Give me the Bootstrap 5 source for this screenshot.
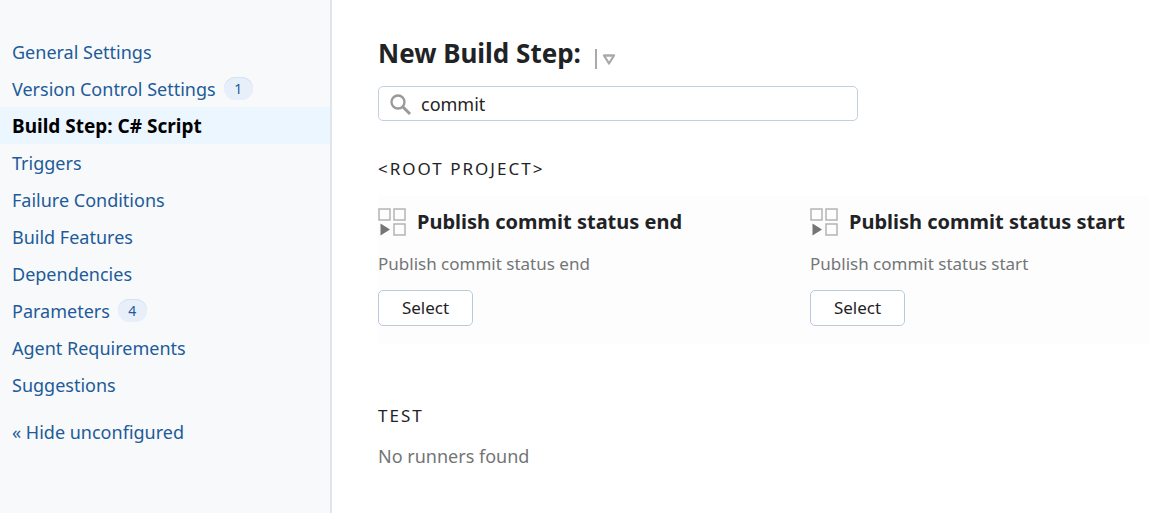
<!DOCTYPE html>
<html lang="en">
<head>
<meta charset="utf-8">
<meta name="viewport" content="width=device-width, initial-scale=1">
<title>New Build Step</title>
<link href="https://cdn.jsdelivr.net/npm/bootstrap@5.3.0/dist/css/bootstrap.min.css" rel="stylesheet">
<style>
body { font-family: "Noto Sans", "Open Sans", sans-serif; font-size: 18px; line-height: 25px; color: #1f2326; }
.settings-nav { width: 332px; background: #f7f9fb; border-right: 2px solid #dfe5eb; padding-top: 33px; }
.settings-nav .nav-link { color: #1e5b99; padding: 7px 12px 5px; gap: 8px; }
.settings-nav .nav-link.active { background: #ebf6ff; color: #000; font-size: 19px; font-weight: 700; }
.settings-nav .toggle-link { margin-top: 10px; }
.count { background: #e7effa; box-shadow: inset 0 1px #d3e2f0; color: #1e5b99; font-size: 14px; line-height: 23px; width: 29px; height: 23px; margin: -2px 0 0; }
.step-main { padding: 35px 0 24px 46px; }
.step-heading { gap: 14px; }
.step-title { font-size: 26px; line-height: 36px; font-weight: 700; }
.search-box { width: 480px; max-width: 100%; height: 35px; margin-top: 15px; }
.search-box svg { left: 12px; top: 8px; }
.search-box input { height: 35px; border-color: #c3d1df; border-radius: 5px; padding: 0 12px 0 42px; font-size: 18px; color: #1f2326; }
.section-title { font-size: 17px; line-height: 24px; font-weight: 400; letter-spacing: 2px; text-transform: uppercase; }
.root-title { margin: 36px 0 15px; }
.test-title { margin: 60px 0 16px; }
.runner-grid { display: grid; grid-template-columns: minmax(0, 432px) minmax(0, 1fr); background: #fdfdfd; }
.runner { padding: 12px 0 18px; }
.runner h3 { font-size: 20px; line-height: 28px; font-weight: 700; gap: 11px; }
.runner p { font-size: 17px; line-height: 24px; color: #737577; margin: 16px 0 14px; }
.select-btn { width: 95px; height: 36px; padding: 0; font-size: 17px; border: 1px solid #b8cbdb; border-radius: 5px; background: #fff; color: #1f2326; }
.empty-note { color: #737577; }
</style>
</head>
<body>
<svg class="d-none" aria-hidden="true">
  <symbol id="runner-icon" viewBox="0 0 28 28">
    <path d="M1 1h11v11H1zM16 1h11v11H16zM16 16h11v11H16z" fill="none" stroke="#b4b4b4" stroke-width="1.5"/>
    <path d="M2.500 15.500v12L12 21.500z" fill="#737577"/>
  </symbol>
</svg>
<div class="d-flex min-vh-100">
  <nav class="settings-nav flex-shrink-0" aria-label="Build configuration settings">
    <div class="nav flex-column">
      <a class="nav-link" href="#">General Settings</a>
      <a class="nav-link d-flex align-items-center" href="#">Version Control Settings <span class="count rounded-pill text-center">1</span></a>
      <a class="nav-link active" aria-current="page" href="#">Build Step: C# Script</a>
      <a class="nav-link" href="#">Triggers</a>
      <a class="nav-link" href="#">Failure Conditions</a>
      <a class="nav-link" href="#">Build Features</a>
      <a class="nav-link" href="#">Dependencies</a>
      <a class="nav-link d-flex align-items-center" href="#">Parameters <span class="count rounded-pill text-center">4</span></a>
      <a class="nav-link" href="#">Agent Requirements</a>
      <a class="nav-link" href="#">Suggestions</a>
      <a class="nav-link toggle-link" href="#">« Hide unconfigured</a>
    </div>
  </nav>
  <main class="step-main flex-grow-1">
    <div class="step-heading d-flex align-items-end">
      <h1 class="step-title mb-0">New Build Step:</h1>
      <button type="button" class="btn p-0 border-0 d-flex" aria-label="Switch build step">
        <svg width="24" height="24" viewBox="0 0 24 24" fill="none"><path d="M0 2h2v20H0z" fill="#aaa"/><path d="M9 8.500h10l-5 8z" stroke="#aaa" stroke-width="2.300" stroke-linejoin="round"/></svg>
      </button>
    </div>
    <div class="search-box position-relative">
      <svg class="position-absolute" width="22" height="22" viewBox="0 0 22 22" fill="none" stroke="#999" aria-hidden="true"><circle cx="8" cy="8" r="6.500" stroke-width="2.300"/><path d="M12.500 12.500L20 20" stroke-width="3"/></svg>
      <input class="form-control" type="text" value="commit" aria-label="Search runners">
    </div>
    <h2 class="section-title root-title">&lt;Root project&gt;</h2>
    <div class="runner-grid">
      <section class="runner">
        <h3 class="d-flex align-items-center mb-0"><svg width="28" height="28" aria-hidden="true"><use href="#runner-icon"/></svg>Publish commit status end</h3>
        <p>Publish commit status end</p>
        <button type="button" class="btn select-btn">Select</button>
      </section>
      <section class="runner">
        <h3 class="d-flex align-items-center mb-0"><svg width="28" height="28" aria-hidden="true"><use href="#runner-icon"/></svg>Publish commit status start</h3>
        <p>Publish commit status start</p>
        <button type="button" class="btn select-btn">Select</button>
      </section>
    </div>
    <h2 class="section-title test-title">Test</h2>
    <p class="empty-note mb-0">No runners found</p>
  </main>
</div>
<script src="https://cdn.jsdelivr.net/npm/bootstrap@5.3.0/dist/js/bootstrap.bundle.min.js"></script>
</body>
</html>
